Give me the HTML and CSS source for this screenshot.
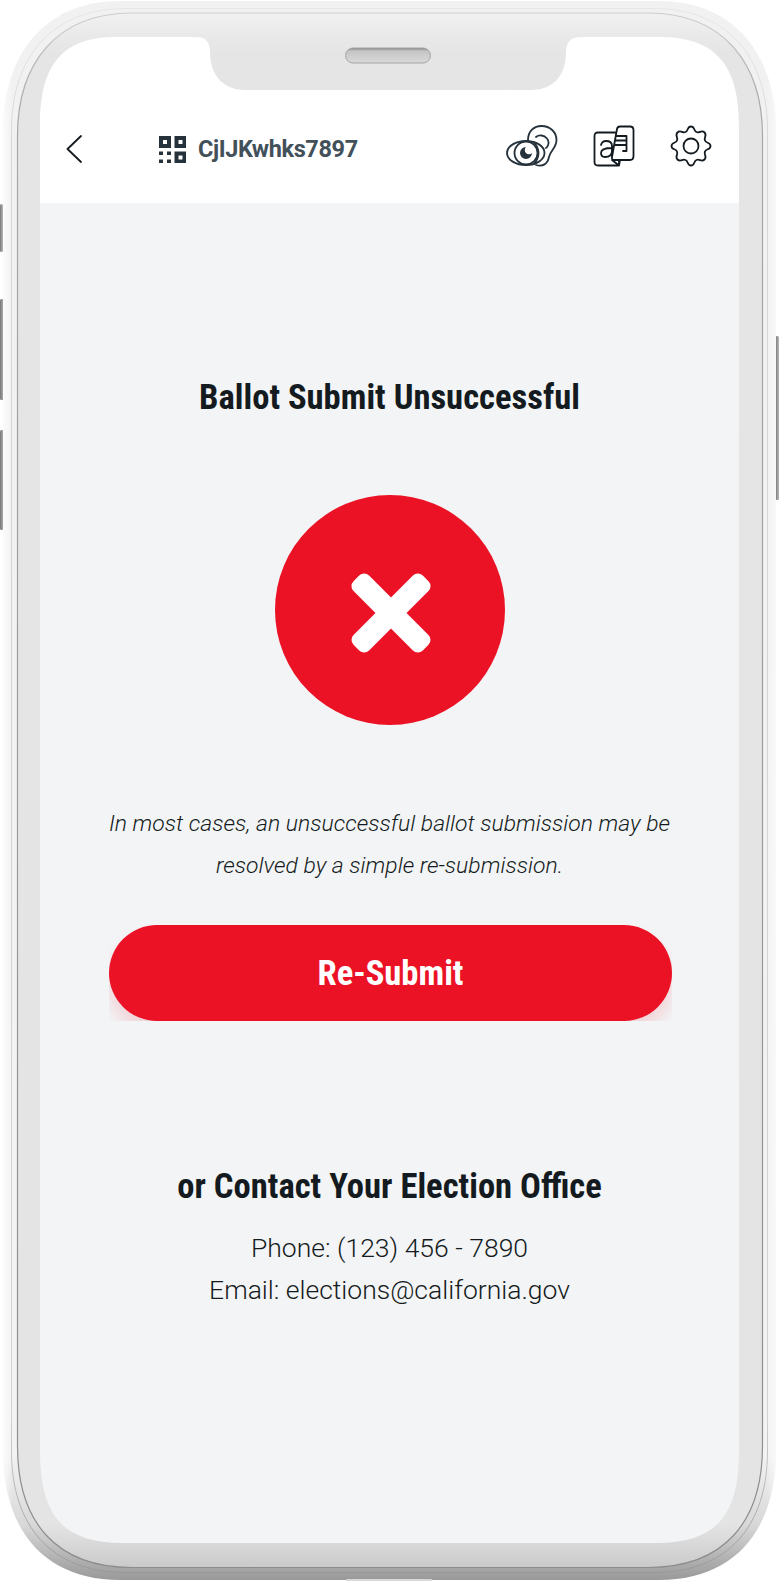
FILE: index.html
```html
<!DOCTYPE html>
<html lang="en">
<head>
<meta charset="utf-8">
<title>Ballot Submit Unsuccessful</title>
<link rel="stylesheet" href="styles.css">
</head>
<body>
<div class="device">
  <svg class="frame" viewBox="0 0 780 1581" aria-hidden="true">
    <defs>
      <linearGradient id="rim" x1="0" y1="0" x2="0" y2="1">
        <stop offset="0" stop-color="#f1f1f1"/><stop offset=".92" stop-color="#f3f3f3"/><stop offset=".965" stop-color="#d8d8d8"/><stop offset="1" stop-color="#999"/>
      </linearGradient>
      <linearGradient id="edge" x1="0" y1="0" x2="1" y2="0">
        <stop offset="0" stop-color="#fff" stop-opacity=".7"/><stop offset=".012" stop-color="#fff" stop-opacity="0"/><stop offset=".988" stop-color="#fff" stop-opacity="0"/><stop offset="1" stop-color="#fff" stop-opacity=".5"/>
      </linearGradient>
      <linearGradient id="rimline" x1="0" y1="0" x2="0" y2="1">
        <stop offset="0" stop-color="#e6e6e6"/><stop offset=".1" stop-color="#d6d6d6"/><stop offset=".9" stop-color="#d2d2d2"/><stop offset="1" stop-color="#999"/>
      </linearGradient>
      <linearGradient id="bezel" x1="0" y1="0" x2="0" y2="1">
        <stop offset="0" stop-color="#f1f1f1"/><stop offset=".015" stop-color="#e9e9e9"/><stop offset=".026" stop-color="#e5e5e5"/><stop offset=".972" stop-color="#e4e4e4"/><stop offset="1" stop-color="#cacaca"/>
      </linearGradient>
      <linearGradient id="bezelline" x1="0" y1="0" x2="0" y2="1">
        <stop offset="0" stop-color="#cdcdcd"/><stop offset=".06" stop-color="#a8a8a8"/><stop offset="1" stop-color="#8c8c8c"/>
      </linearGradient>
      <linearGradient id="slot" x1="0" y1="0" x2="0" y2="1">
        <stop offset="0" stop-color="#858585"/><stop offset=".2" stop-color="#c5c5c5"/><stop offset="1" stop-color="#d9d9d9"/>
      </linearGradient>
      <linearGradient id="key" x1="0" y1="0" x2="1" y2="0">
        <stop offset="0" stop-color="#777"/><stop offset="1" stop-color="#b9b9b9"/>
      </linearGradient>
    </defs>
    <g fill="url(#key)">
      <rect x="0" y="204" width="3" height="48" rx="1.5"/>
      <rect x="0" y="299" width="4" height="101" rx="1.500"/>
      <rect x="0" y="430" width="4" height="100" rx="1.500"/>
      <rect x="775.500" y="336" width="3.500" height="164" rx="1.500"/>
    </g>
    <path fill="url(#rim)" d="M120 1H659C737 1 776 58 776 130V1451C776 1532 733 1580 659 1580H120C46 1580 3 1532 3 1451V130C3 58 42 1 120 1Z"/>
    <path fill="url(#edge)" d="M120 1H659C737 1 776 58 776 130V1451C776 1532 733 1580 659 1580H120C46 1580 3 1532 3 1451V130C3 58 42 1 120 1Z"/>
    <path fill="none" stroke="url(#rimline)" d="M126 8.500H654C728 8.500 767.500 58 767.500 130V1451C767.500 1526 728 1572.500 654 1572.500H126C51 1572.500 11.500 1526 11.500 1451V130C11.500 58 51 8.500 126 8.500Z"/>
    <path fill="url(#bezel)" stroke="url(#bezelline)" stroke-width="1.200" d="M132 13H648C724 13 762.500 64 762.500 136V1446C762.500 1522 724 1567.500 648 1567.500H132C56 1567.500 17.500 1522 17.500 1446V136C17.500 64 56 13 132 13Z"/>
    <path fill="#fff" d="M115 37H198Q210 38 210 52C210 77 225 90 245 90H531C552 90 566 77 566 52Q566 38 579 37H660C718 37 739 68 739 125V203H40V125C40 68 60 37 115 37Z"/>
    <path fill="#f3f4f6" d="M40 203H739V1451C739 1513 718 1543 657 1543H122C61 1543 40 1513 40 1451Z"/>
    <rect x="345.500" y="48" width="85" height="15" rx="7.500" fill="url(#slot)" stroke="#a6a6a6"/>
    <rect x="346" y="1579" width="86" height="2" rx="1" fill="#d8d8d8"/>
  </svg>
  <div class="screen">
    <header class="bar">
      <svg class="back" viewBox="0 0 16 28"><path d="M15 1 1.500 14 15 27"/></svg>
      <svg class="qr" viewBox="0 0 27 27"><path fill-rule="evenodd" d="M0 0H12V12H0ZM4 4V8H8V4ZM15.500 0H27V12H15.500ZM19.500 4V8H23.500V4ZM15.500 15.500H27V27H15.500ZM19.500 19.500V23.500H23.500V19.500ZM0 15.500H4V19H0ZM8 15.500H12V19H8ZM0 23.500H4V27H0ZM8 23.500H12V27H8Z"/></svg>
      <span class="code">CjIJKwhks7897</span>
      <svg class="access" viewBox="0 0 52 42"><path d="M22 15C22 6 28 1 35.500 1C44 1 50.500 7 50.500 15C50.500 23 44.500 25 43 32C41.500 39 37 42 30 40M30 12C33 9.500 38 10 41 13.500C44 17 42 22 40 23"/><path class="lid" d="M1 28C1 21 10 16 20 16S38.500 21 38.500 28S30 40 20 40S1 35 1 28Z"/><circle cx="20" cy="28" r="11.500"/><path d="M28 17Q37 28 28 39"/><path class="solid" d="M20 22A6 6 0 1 0 26 28A4 4 0 0 1 20 22Z"/></svg>
      <svg class="lang" viewBox="0 0 42 42"><path d="M22 7.500H5Q1.500 7.500 1.500 11V37Q1.500 40.500 5 40.500H26V36M19 35 26 40.500 27 35M8 20Q9 16 13 16Q19 16 19 21V32M19 23Q8 23 8 28Q8 32 12 32Q19 32 19 26M27 1.500H37Q40.500 1.500 40.500 5V31Q40.500 35 37 35H21Q18.500 35 19 32L24 4Q24.500 1.500 27 1.500ZM24 11H33.500V26H30M23 15.500H33.500M22 20H33.500"/></svg>
      <svg class="gear" viewBox="0 0 42 42"><circle cx="21" cy="21" r="7.500"/><path d="M21 1.500C25 1.500 23.500 6 26.500 7C29.500 8.500 31.500 4.500 34.500 7.500S33.500 12.500 35 15.500C36 18.500 40.500 17 40.500 21S36 23.500 35 26.500C33.500 29.500 37.500 31.500 34.500 34.500S29.500 33.500 26.500 35C23.500 36 25 40.500 21 40.500S18.500 36 15.500 35C12.500 33.500 10.500 37.500 7.500 34.500S8.500 29.500 7 26.500C6 23.500 1.500 25 1.500 21S6 18.500 7 15.500C8.500 12.500 4.500 10.500 7.500 7.500S12.500 8.500 15.500 7C18.500 6 17 1.500 21 1.500Z"/></svg>
    </header>
    <main class="content">
      <h1 class="title">Ballot Submit Unsuccessful</h1>
      <svg class="status" viewBox="0 0 230 230"><circle cx="115" cy="115" r="115" fill="#eb1226"/><g fill="#fff" transform="translate(116 118)"><rect x="-49" y="-11" width="98" height="22" rx="7" transform="rotate(45)"/><rect x="-49" y="-11" width="98" height="22" rx="7" transform="rotate(-45)"/></g></svg>
      <p class="note"><span>In most cases, an unsuccessful ballot submission may be</span><span>resolved by a simple re-submission.</span></p>
      <div class="action"><button class="resubmit">Re-Submit</button></div>
      <h2 class="title contact">or Contact Your Election Office</h2>
      <p class="line">Phone: (123) 456 - 7890</p>
      <p class="line">Email: elections@california.gov</p>
    </main>
  </div>
</div>
</body>
</html>
```
FILE: styles.css
```css
* { box-sizing: border-box; }
body { margin: 0; background: #fff; font-family: Roboto, sans-serif; color: #141b20; }
.device { position: relative; width: 780px; height: 1581px; overflow: hidden; }
.frame { position: absolute; inset: 0; width: 780px; height: 1581px; }
.screen { position: relative; padding: 91px 41px 0 40px; }
.bar { display: flex; align-items: center; height: 112px; padding: 4px 27px 0 26px; }
.bar svg { flex: none; fill: none; stroke: #141b20; stroke-width: 1.8; stroke-linecap: round; stroke-linejoin: round; }
.back { width: 16px; height: 28px; }
.bar .qr { width: 27px; height: 27px; margin-left: 77px; fill: #26323b; stroke: none; }
.code { width: 160px; margin-left: 12px; font-size: 23.500px; letter-spacing: -.38px; font-weight: 700; line-height: 30px; color: #42505a; white-space: nowrap; }
.bar .access { width: 52px; height: 42px; margin: -7px 0 0 148px; stroke: #26323b; }
.access .lid { fill: #fff; }
.access .solid { fill: #26323b; stroke: none; }
.lang { width: 42px; height: 42px; margin: -7px 0 0 35.500px; }
.gear { width: 42px; height: 42px; margin: -7px 0 0 35px; }
.content { display: flex; flex-direction: column; align-items: center; padding-top: 174px; }
.title { margin: 0; font-family: "Roboto Condensed", Roboto, sans-serif; font-stretch: 75%; font-size: 34.600px; font-weight: 700; line-height: 40px; white-space: nowrap; }
.status { width: 230px; height: 230px; margin-top: 78px; }
.note { display: flex; flex-direction: column; align-items: center; margin: 78px 0 0; font-size: 22.950px; font-style: italic; font-weight: 300; line-height: 42px; white-space: nowrap; }
.action { width: 563px; height: 96px; margin: 38px 0 0 2px; overflow: hidden; }
.resubmit { display: flex; justify-content: center; align-items: center; width: 563px; height: 96px; padding: 0; border: 0; border-radius: 48px; background: #eb1226; color: #fff; box-shadow: 0 12px 16px rgba(235, 18, 38, .15); font-family: "Roboto Condensed", Roboto, sans-serif; font-stretch: 75%; font-size: 34.600px; font-weight: 700; }
.contact { margin-top: 145px; margin-bottom: 21px; }
.line { margin: 0; font-size: 26.500px; font-weight: 300; line-height: 42px; white-space: nowrap; }
```
